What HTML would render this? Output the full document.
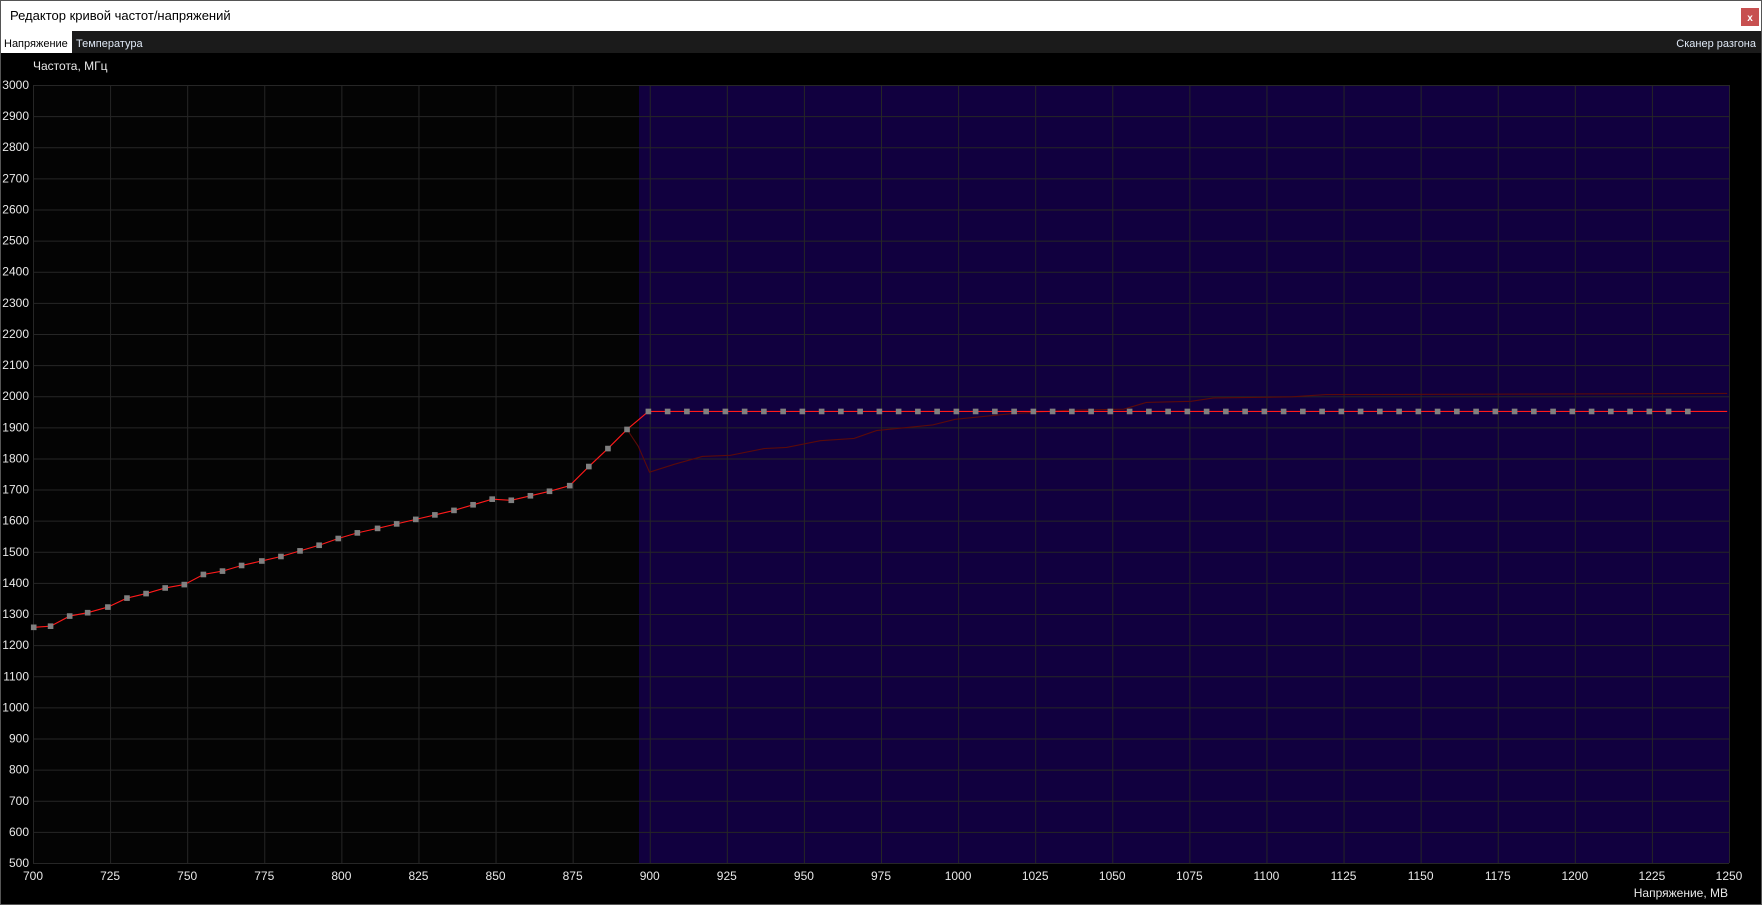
<!DOCTYPE html>
<html><head><meta charset="utf-8"><style>
html,body{margin:0;padding:0;background:#000;width:1762px;height:905px;overflow:hidden;font-family:"Liberation Sans",sans-serif}
</style></head><body>
<svg width="1762" height="905" xmlns="http://www.w3.org/2000/svg" style="display:block">
<rect x="0" y="0" width="1762" height="905" fill="#000"/>
<rect x="0" y="0" width="1762" height="31" fill="#fff"/>
<text x="10" y="20" font-size="13" fill="#000" font-family="Liberation Sans, sans-serif">Редактор кривой частот/напряжений</text>
<rect x="1741" y="8" width="18" height="18" fill="#c75050"/>
<text x="1750" y="21" font-size="10" fill="#fff" text-anchor="middle" font-weight="bold" font-family="Liberation Sans, sans-serif">x</text>
<rect x="0" y="31" width="1762" height="22" fill="#1b1b1b"/>
<rect x="0" y="31" width="72" height="22" fill="#fff"/>
<text x="4" y="47" font-size="11" fill="#000" font-family="Liberation Sans, sans-serif">Напряжение</text>
<text x="76" y="47" font-size="11" fill="#dfe8f5" font-family="Liberation Sans, sans-serif">Температура</text>
<text x="1756" y="47" font-size="11" fill="#dfe8f5" text-anchor="end" font-family="Liberation Sans, sans-serif">Сканер разгона</text>
<text x="33" y="70" font-size="12" fill="#e8e8e8" font-family="Liberation Sans, sans-serif">Частота, МГц</text>
<rect x="33" y="85" width="606" height="778" fill="#040404"/>
<rect x="639" y="85" width="1090" height="778" fill="#11003f"/>
<g stroke="#262626" stroke-width="1" id="grid"></g>
<g id="labels" font-size="12" fill="#e8e8e8" font-family="Liberation Sans, sans-serif"></g>
<text x="1728" y="897" font-size="12" fill="#e8e8e8" text-anchor="end" font-family="Liberation Sans, sans-serif">Напряжение, МВ</text>
<g transform="scale(1.12372 1.12422)">
<polyline fill="none" stroke="#5a0a0a" stroke-width="1" points="558,382 568,397 578,420 600,413 625,406 650,405 680,399 700,398 730,392 760,390 780,383 800,381 830,378 850,373 900,368 950,365 1000,364 1020,358 1060,357 1080,354 1150,353 1180,351 1537,350"/>
<polyline fill="none" stroke="#ff1a1a" stroke-width="1" points="30,558 45,557 62,548 78,545 96,540 113,532 130,528 147,523 164,520 181,511 198,508 215,503 233,499 250,495 267,490 284,485 301,479 318,474 336,470 353,466 370,462 387,458 404,454 421,449 438,444 455,445 472,441 489,437 507,432 524,415 541,399 558,382 577,366 1537,366"/>
<g fill="#808080" id="sq"></g>
</g>
<script>
var g=document.getElementById('grid'),L=document.getElementById('labels'),ns='http://www.w3.org/2000/svg';
function el(p,t,a,txt){var e=document.createElementNS(ns,t);for(var k in a)e.setAttribute(k,a[k]);if(txt)e.textContent=txt;p.appendChild(e);}
for(var i=0;i<=25;i++){var y=85+i*778/25;el(g,'line',{x1:33,x2:1729,y1:y+0.5,y2:y+0.5});el(L,'text',{x:29,y:y+4,'text-anchor':'end'},String(3000-i*100));}
for(var j=0;j<=22;j++){var x=33+j*1696/22;el(g,'line',{x1:x+0.5,x2:x+0.5,y1:85,y2:863});el(L,'text',{x:x,y:880,'text-anchor':'middle'},String(700+j*25));}
var pts=[[30,558],[45,557],[62,548],[78,545],[96,540],[113,532],[130,528],[147,523],[164,520],[181,511],[198,508],[215,503],[233,499],[250,495],[267,490],[284,485],[301,479],[318,474],[336,470],[353,466],[370,462],[387,458],[404,454],[421,449],[438,444],[455,445],[472,441],[489,437],[507,432],[524,415],[541,399],[558,382]];
for(var k=0;k<55;k++)pts.push([577+k*(1502-577)/54,366]);
var s=document.getElementById('sq');
pts.forEach(function(p){el(s,'rect',{x:p[0]-2.5,y:p[1]-2.5,width:5,height:5});});
</script>
<rect x="0.5" y="0.5" width="1761" height="904" fill="none" stroke="#555"/>
</svg>
</body></html>
